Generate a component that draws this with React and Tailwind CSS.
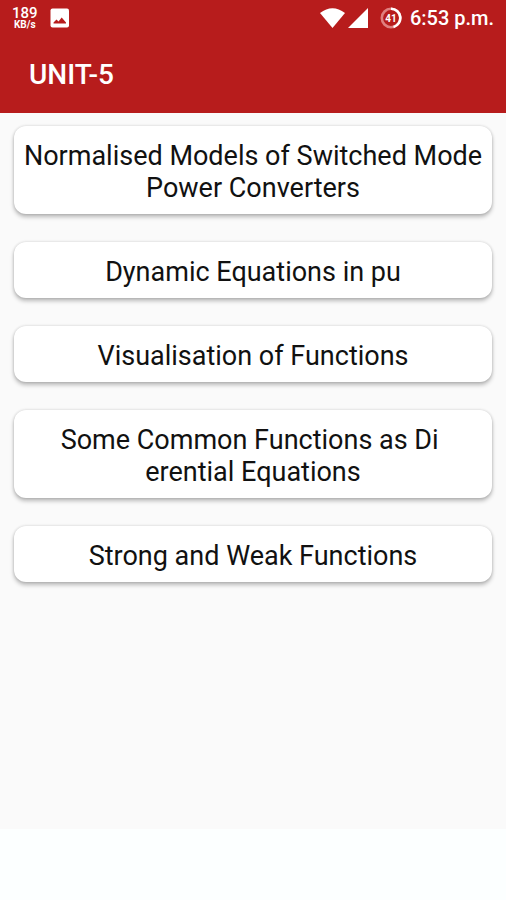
const topics = [
  "Normalised Models of Switched Mode Power Converters",
  "Dynamic Equations in pu",
  "Visualisation of Functions",
  "Some Common Functions as Di\u00a0\nerential Equations",
  "Strong and Weak Functions",
];

const StatusBar = () => (
  <div className="flex h-9 items-center justify-between px-3 text-white">
    <div className="flex items-center gap-3">
      <div className="flex flex-col items-center">
        <span className="text-[15px] leading-[14px] font-medium">189</span>
        <span className="text-[10px] leading-[10px] font-bold">KB/s</span>
      </div>
      {/* Screenshot notification */}
      <svg className="h-5 w-5" viewBox="0 0 20 20" fill="none">
        <rect x="0.5" y="0.5" width="18.5" height="19" rx="2" fill="#fff" />
        <path d="M3.5 15.5 V14.5 L6.5 11.5 L8.5 13.6 L11.7 9.6 L16 14.5 V15.5 Z" fill="#b71c1c" />
      </svg>
    </div>

    <div className="flex items-center">
      <svg className="h-5 w-[25px]" viewBox="0 0 25 20" fill="#fff">
        <path d="M0 5 Q12.5 -4.5 25 5 L12.5 20 Z" />
      </svg>
      <svg className="ml-[3px] h-5 w-5" viewBox="0 0 20 20" fill="#fff">
        <path d="M20 0 V20 H0 Z" />
      </svg>
      {/* Battery ring */}
      <svg className="ml-3 h-[22px] w-[22px]" viewBox="0 0 22 22" fill="none">
        <circle cx="11" cy="11" r="9.2" stroke="#df8080" strokeWidth="2.6" />
        <path d="M11 1.8 A9.2 9.2 0 0 1 13.5 19.9" stroke="#fff" strokeWidth="2.6" />
        <text x="11" y="14.5" textAnchor="middle" fill="#fff" fontSize="10" fontWeight="700">
          41
        </text>
      </svg>
      <span className="ml-2 text-[20px] leading-6 font-medium">6:53 p.m.</span>
    </div>
  </div>
);

const App = () => {
  return (
    <div className="flex min-h-screen flex-col bg-[#fafafa] font-[Roboto,sans-serif]">
      <header className="bg-[#b71c1c]">
        <StatusBar />
        <div className="flex h-[77px] items-center px-[29px]">
          <h1 className="text-[28px] leading-8 font-medium text-white">UNIT-5</h1>
        </div>
      </header>

      <main className="flex flex-1 flex-col gap-7 px-[14px] pt-[13px] pb-7">
        {topics.map((topic) => (
          <button
            key={topic}
            type="button"
            className="w-full rounded-xl bg-white px-2 pt-[14px] pb-[10px] text-center text-[27px] leading-8 whitespace-pre-line text-[#111111] shadow-[0_3px_4px_rgba(0,0,0,0.26),0_0_3px_rgba(0,0,0,0.16)]"
          >
            {topic}
          </button>
        ))}
      </main>

      <footer className="h-[71px] bg-[#fcffff]" />
    </div>
  );
};

export default App;
